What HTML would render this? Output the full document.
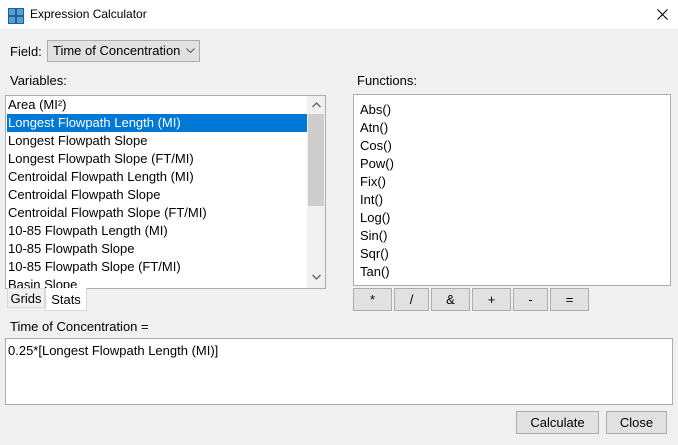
<!DOCTYPE html><html><head><style>
body{margin:0;width:678px;height:445px;background:#f0f0f0;font-family:"Liberation Sans",sans-serif;font-size:13px;color:#000;position:relative;overflow:hidden}
.a{position:absolute}
.box{position:absolute;background:#fff;border:1px solid #adadad;box-sizing:border-box}
.row{position:absolute;left:2px;height:18px;line-height:18px;white-space:nowrap}
.btn{position:absolute;background:#e1e1e1;border:1px solid #adadad;box-sizing:border-box;text-align:center;line-height:21px}
</style></head><body>
<div class="a" style="left:0;top:0;width:678px;height:29px;background:#fff"></div>
<svg class="a" style="left:8px;top:8px" width="16" height="16"><rect width="16" height="16" fill="#2d5c86"/><rect x="1" y="1" width="6" height="6" fill="#4aa3df"/><rect x="9" y="1" width="6" height="6" fill="#4aa3df"/><rect x="1" y="9" width="6" height="6" fill="#4aa3df"/><rect x="9" y="9" width="6" height="6" fill="#4aa3df"/></svg>
<div class="a" style="left:30px;top:7px;font-size:12px">Expression Calculator</div>
<svg class="a" style="left:657px;top:9px" width="11" height="11"><path d="M0.5 0.5L10.5 10.5M10.5 0.5L0.5 10.5" stroke="#000" stroke-width="1.1"/></svg>
<div class="a" style="left:10px;top:44px">Field:</div>
<div class="a" style="left:47px;top:40px;width:153px;height:22px;background:#e1e1e1;border:1px solid #adadad;box-sizing:border-box;padding-left:5px;line-height:20px">Time of Concentration</div>
<svg class="a" style="left:186px;top:48px" width="9" height="6"><path d="M0.5 0.5L4.5 4.5L8.5 0.5" fill="none" stroke="#555"/></svg>
<div class="a" style="left:10px;top:73px">Variables:</div>
<div class="box" style="left:5px;top:95px;width:321px;height:194px;overflow:hidden">
<div class="a" style="left:1px;top:18px;width:300px;height:18px;background:#0078d7"></div>
<div class="row" style="top:0">Area (MI²)</div>
<div class="row" style="top:18px;color:#fff">Longest Flowpath Length (MI)</div>
<div class="row" style="top:36px">Longest Flowpath Slope</div>
<div class="row" style="top:54px">Longest Flowpath Slope (FT/MI)</div>
<div class="row" style="top:72px">Centroidal Flowpath Length (MI)</div>
<div class="row" style="top:90px">Centroidal Flowpath Slope</div>
<div class="row" style="top:108px">Centroidal Flowpath Slope (FT/MI)</div>
<div class="row" style="top:126px">10-85 Flowpath Length (MI)</div>
<div class="row" style="top:144px">10-85 Flowpath Slope</div>
<div class="row" style="top:162px">10-85 Flowpath Slope (FT/MI)</div>
<div class="row" style="top:180px">Basin Slope</div>
<div class="a" style="left:301px;top:0;width:18px;height:192px;background:#f0f0f0"></div>
<div class="a" style="left:302px;top:18px;width:16px;height:92px;background:#cdcdcd"></div>
<svg class="a" style="left:306px;top:6px" width="9" height="6"><path d="M0.5 5L4.5 1L8.5 5" fill="none" stroke="#606060" stroke-width="1.3"/></svg>
<svg class="a" style="left:306px;top:178px" width="9" height="6"><path d="M0.5 1L4.5 5L8.5 1" fill="none" stroke="#606060" stroke-width="1.3"/></svg>
</div>
<div class="a" style="left:7px;top:288px;width:38px;height:20px;border:1px solid #d9d9d9;box-sizing:border-box;background:#f0f0f0;text-align:center;line-height:19px">Grids</div>
<div class="a" style="left:45px;top:288px;width:42px;height:23px;border:1px solid #d9d9d9;border-top:none;box-sizing:border-box;background:#fff;text-align:center;line-height:24px">Stats</div>
<div class="a" style="left:10px;top:319px">Time of Concentration =</div>
<div class="box" style="left:5px;top:338px;width:668px;height:67px;padding:4px 2px">0.25*[Longest Flowpath Length (MI)]</div>
<div class="a" style="left:357px;top:73px">Functions:</div>
<div class="box" style="left:353px;top:94px;width:318px;height:192px">
<div class="row" style="left:6px;top:6px">Abs()</div><div class="row" style="left:6px;top:24px">Atn()</div><div class="row" style="left:6px;top:42px">Cos()</div><div class="row" style="left:6px;top:60px">Pow()</div><div class="row" style="left:6px;top:78px">Fix()</div><div class="row" style="left:6px;top:96px">Int()</div><div class="row" style="left:6px;top:114px">Log()</div><div class="row" style="left:6px;top:132px">Sin()</div><div class="row" style="left:6px;top:150px">Sqr()</div><div class="row" style="left:6px;top:168px">Tan()</div>
</div>
<div class="btn" style="left:353px;top:288px;width:39px;height:23px">*</div>
<div class="btn" style="left:394px;top:288px;width:35px;height:23px">/</div>
<div class="btn" style="left:431px;top:288px;width:39px;height:23px">&amp;</div>
<div class="btn" style="left:472px;top:288px;width:39px;height:23px">+</div>
<div class="btn" style="left:513px;top:288px;width:35px;height:23px">-</div>
<div class="btn" style="left:550px;top:288px;width:39px;height:23px">=</div>
<div class="btn" style="left:516px;top:411px;width:83px;height:23px">Calculate</div>
<div class="btn" style="left:606px;top:411px;width:61px;height:23px">Close</div>
</body></html>
